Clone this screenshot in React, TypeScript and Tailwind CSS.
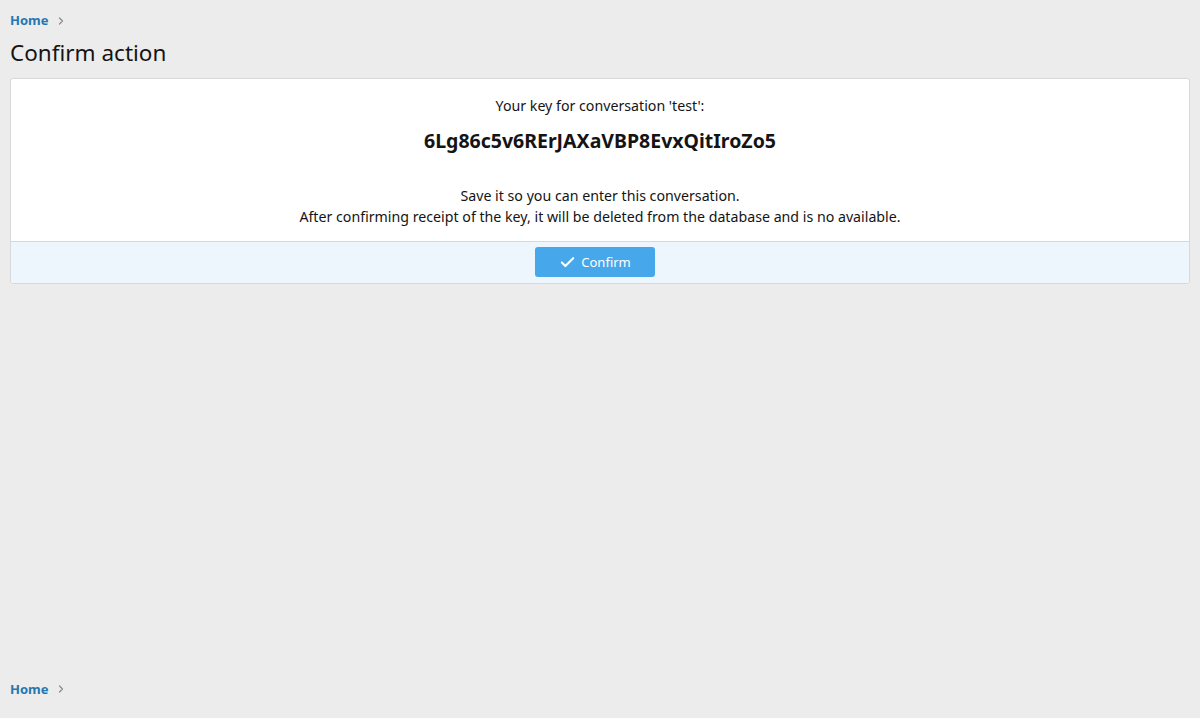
import { Check, ChevronRight } from 'lucide-react';

function Crumbs() {
    return (
        <div className="flex items-center gap-1.5 text-[13px] font-bold text-[#2577b1]">
            <a href="#">Home</a>
            <ChevronRight className="h-3 w-3 text-[#8c8c8c]" strokeWidth={2.5} />
        </div>
    );
}

export default function App() {
    return (
        <div
            className="flex min-h-[718px] flex-col bg-[#ececec] px-[10px] text-[#141414]"
            style={{ fontFamily: '"Segoe UI", "Noto Sans", sans-serif' }}
        >
            <div className="pt-[11px]">
                <Crumbs />
            </div>
            <h1 className="mt-[7px] mb-[10px] text-[22.5px] leading-[30px] font-normal">Confirm action</h1>

            <div className="rounded-[3px] border border-[#d8d8d8] bg-white">
                <div className="flex flex-col items-center px-2.5 pt-[16px] pb-[14px] text-center text-[14.2px] leading-[21px]">
                    <div>Your key for conversation 'test':</div>
                    <div className="mt-[12px] text-[19.5px] leading-[26px] font-bold">6Lg86c5v6RErJAXaVBP8EvxQitIroZo5</div>
                    <div className="mt-[31px]">Save it so you can enter this conversation.</div>
                    <div>After confirming receipt of the key, it will be deleted from the database and is no available.</div>
                </div>
                <div className="flex justify-center rounded-b-[3px] border-t border-[#d8d8d8] bg-[#edf6fd] pt-[5px] pb-[6px]">
                    <button className="mr-[10px] flex h-[30px] w-[120px] items-center justify-center gap-[5px] rounded-[3px] bg-[#47a7eb] pt-[2px] text-[13px] text-white">
                        <Check className="h-[17px] w-[17px]" strokeWidth={3} />
                        Confirm
                    </button>
                </div>
            </div>

            <div className="flex-1" />
            <div className="pb-[19px]">
                <Crumbs />
            </div>
        </div>
    );
}
